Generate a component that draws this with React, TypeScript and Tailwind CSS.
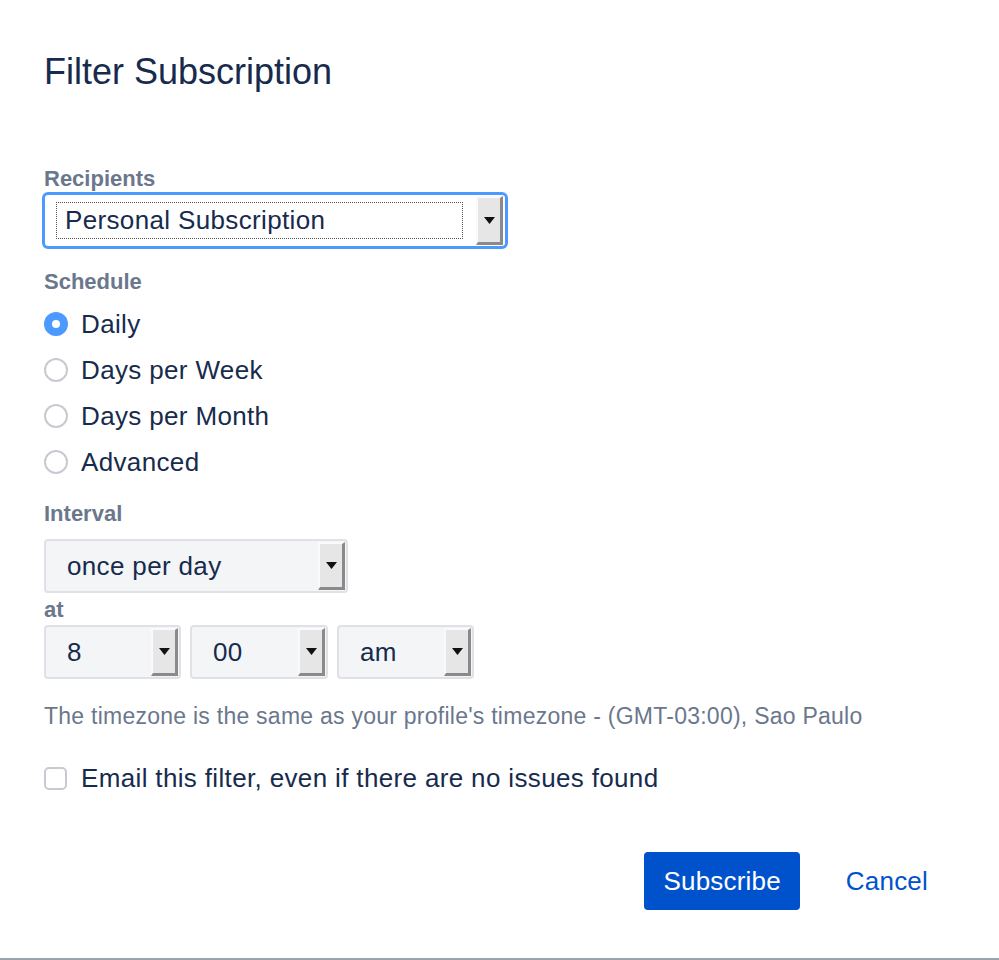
import { useState } from "react"

const FONT = { fontFamily: '"Liberation Sans", Arial, sans-serif' }

function Arrow() {
  return (
    <div className="flex h-full w-[27px] shrink-0 items-center justify-center border-l-2 border-t-2 border-l-[#fafafa] border-t-[#fafafa] border-r-[3px] border-b-[3px] border-r-[#8a8a8a] border-b-[#8a8a8a] bg-[#e6e6e6]">
      <svg width="11" height="7" viewBox="0 0 11 7">
        <path d="M0 0 L11 0 L5.5 7 Z" fill="#111" />
      </svg>
    </div>
  )
}

function Select({ value, width }: { value: string; width: string }) {
  return (
    <div className={`flex h-[54px] ${width} items-stretch rounded-[4px] border-2 border-[#dfe1e6] bg-[#f4f5f7]`}>
      <div className="flex flex-1 items-center pl-[21px] text-[26px] tracking-[0.35px] text-[#172b4d]">{value}</div>
      <div className="py-px pr-px">
        <Arrow />
      </div>
    </div>
  )
}

function Label({ children, className = "" }: { children: string; className?: string }) {
  return <div className={`text-[22px] font-bold leading-[26px] text-[#6b778c] ${className}`}>{children}</div>
}

export default function App() {
  const [schedule, setSchedule] = useState("Daily")
  const [emailEmpty, setEmailEmpty] = useState(false)

  return (
    <div style={FONT} className="h-[960px] w-full border-b-2 border-[#9ba3b1] bg-white px-[44px] pt-[50px] text-[#172b4d]">
      <h1 className="text-[36px] leading-[44px] text-[#172b4d]">Filter Subscription</h1>

      <Label className="mt-[72px]">Recipients</Label>
      {/* focused recipients select */}
      <div className="-ml-[2px] flex h-[57px] w-[466px] items-stretch rounded-[6px] border-[3px] border-[#4c9aff] bg-white">
        <div className="flex flex-1 items-center py-[7px] pl-[11px] pr-[13px]">
          <div className="flex h-full w-full items-center border border-dotted border-[#555] pl-[8px] text-[26px] tracking-[0.35px] text-[#172b4d]">
            Personal Subscription
          </div>
        </div>
        <div className="py-px pr-[2px]">
          <Arrow />
        </div>
      </div>

      <Label className="mt-[20px]">Schedule</Label>
      <div className="mt-[6px] flex flex-col">
        {["Daily", "Days per Week", "Days per Month", "Advanced"].map((s) => (
          <label key={s} className="flex h-[46px] cursor-pointer items-center gap-[13px]" onClick={() => setSchedule(s)}>
            {schedule === s ? (
              <span className="flex size-[24px] items-center justify-center rounded-full bg-[#4c9aff]">
                <span className="size-[8px] rounded-full bg-white" />
              </span>
            ) : (
              <span className="size-[24px] rounded-full border-2 border-[#c7cbd1] bg-white" />
            )}
            <span className="text-[26px] leading-[30px] tracking-[0.35px]">{s}</span>
          </label>
        ))}
      </div>

      <Label className="mt-[16px]">Interval</Label>
      <div className="mt-[12px]">
        <Select value="once per day" width="w-[304px]" />
      </div>

      <Label className="mt-[4px]">at</Label>
      <div className="mt-[2px] flex gap-[9px]">
        <Select value="8" width="w-[137px]" />
        <Select value="00" width="w-[138px]" />
        <Select value="am" width="w-[137px]" />
      </div>

      <p className="mt-[23px] text-[23px] leading-[28px] tracking-[0.25px] text-[#6b778c]">
        The timezone is the same as your profile's timezone - (GMT-03:00), Sao Paulo
      </p>

      <label className="mt-[33px] flex h-[30px] cursor-pointer items-center gap-[14px]" onClick={() => setEmailEmpty(!emailEmpty)}>
        <span className={`size-[23px] rounded-[5px] border-2 ${emailEmpty ? "border-[#4c9aff] bg-[#4c9aff]" : "border-[#c7cbd1] bg-white"}`} />
        <span className="text-[26px] leading-[30px] tracking-[0.35px]">Email this filter, even if there are no issues found</span>
      </label>

      <div className="mt-[59px] flex items-center justify-end gap-[46px] pr-[27px]">
        <button className="h-[58px] rounded-[4px] bg-[#0052cc] px-[19px] text-[26px] tracking-[0.2px] text-white">Subscribe</button>
        <button className="text-[26px] tracking-[0.2px] text-[#0052cc]">Cancel</button>
      </div>
    </div>
  )
}
